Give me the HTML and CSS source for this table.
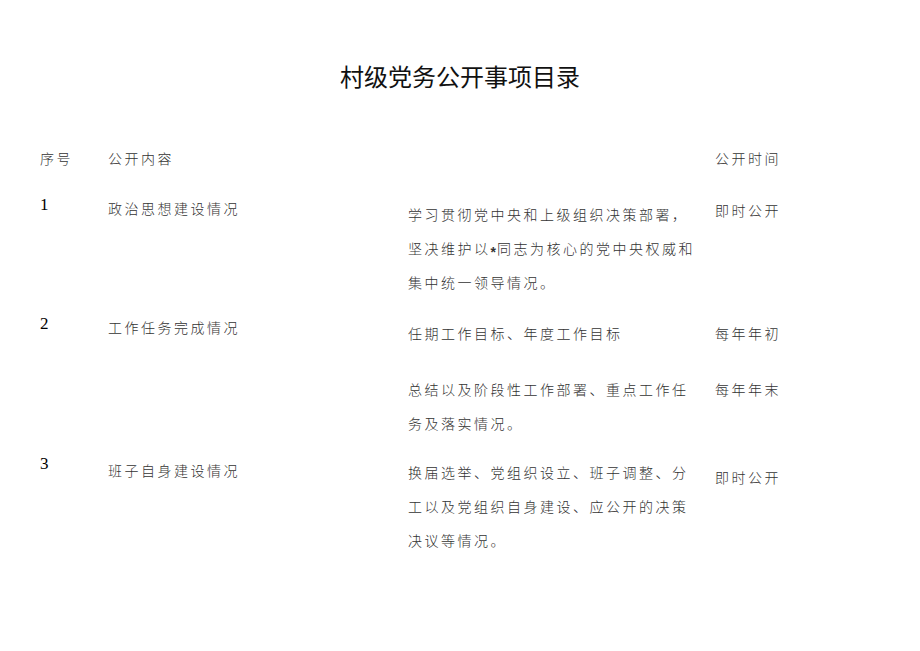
FILE: index.html
```html
<!DOCTYPE html>
<html lang="zh-CN">
<head>
<meta charset="utf-8">
<title>村级党务公开事项目录</title>
<link rel="stylesheet" href="styles.css">
</head>
<body>
<div class="page">
  <h1 class="title">村级党务公开事项目录</h1>

  <div class="row head">
    <div class="cell num-h">序号</div>
    <div class="cell item">公开内容</div>
    <div class="cell content"></div>
    <div class="cell time">公开时间</div>
  </div>

  <div class="row r1">
    <div class="cell num">1</div>
    <div class="cell item">政治思想建设情况</div>
    <div class="cell content">学习贯彻党中央和上级组织决策部署，<br>坚决维护以<span class="star">*</span>同志为核心的党中央权威和<br>集中统一领导情况。</div>
    <div class="cell time t-up">即时公开</div>
  </div>

  <div class="row r2">
    <div class="cell num">2</div>
    <div class="cell item">工作任务完成情况</div>
    <div class="cell content">任期工作目标、年度工作目标</div>
    <div class="cell time">每年年初</div>
  </div>

  <div class="row r2b">
    <div class="cell num"></div>
    <div class="cell item"></div>
    <div class="cell content">总结以及阶段性工作部署、重点工作任<br>务及落实情况。</div>
    <div class="cell time">每年年末</div>
  </div>

  <div class="row r3">
    <div class="cell num">3</div>
    <div class="cell item">班子自身建设情况</div>
    <div class="cell content">换届选举、党组织设立、班子调整、分<br>工以及党组织自身建设、应公开的决策<br>决议等情况。</div>
    <div class="cell time t-down">即时公开</div>
  </div>
</div>
</body>
</html>
```

FILE: styles.css
```css
html, body {
  margin: 0;
  padding: 0;
  background: #ffffff;
}

.page {
  width: 920px;
  min-height: 651px;
  box-sizing: border-box;
  padding: 60px 0 0 40px;
  font-family: "Noto Sans CJK SC", "Noto Sans", sans-serif;
  font-weight: 300;
  color: #333333;
}

.title {
  margin: 0 0 0 -40px;
  text-align: center;
  font-size: 24px;
  line-height: 32px;
  font-weight: 400;
  color: #111111;
  letter-spacing: 0;
}

.row {
  display: grid;
  grid-template-columns: 68px 300px 307px 160px;
  align-items: start;
}

.cell {
  font-size: 14px;
  letter-spacing: 2.5px;
  white-space: nowrap;
}

.item, .num-h {
  line-height: 22px;
}

.num {
  font-family: "Liberation Serif", serif;
  font-size: 17px;
  font-weight: 400;
  color: #000000;
  line-height: 16px;
  letter-spacing: 0;
}

.content {
  line-height: 34px;
}

.star {
  font-family: "Liberation Sans", sans-serif;
  font-weight: 700;
  font-size: 14px;
  letter-spacing: 1px;
  vertical-align: -3px;
  line-height: 0;
}

.time {
  line-height: 34px;
}

.t-up {
  line-height: 26px;
}

.t-down {
  padding-top: 5px;
}

.head {
  margin-top: 55px;
}

.head .time {
  line-height: 22px;
}

.r1 {
  margin-top: 28px;
}

.r2 {
  margin-top: 17px;
}

.r2b {
  margin-top: 22px;
}

.r3 {
  margin-top: 15px;
}

.r3 .num {
  line-height: 18px;
}

.r3 .item {
  line-height: 30px;
}
```
